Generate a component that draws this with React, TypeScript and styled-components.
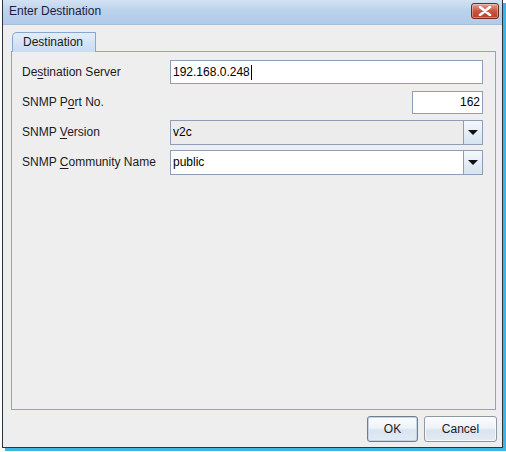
import React from "react";
import styled, { createGlobalStyle } from "styled-components";

const GlobalStyle = createGlobalStyle`
    html, body {
        margin: 0;
        padding: 0;
        background: #ffffff;
    }

    * {
        box-sizing: border-box;
    }
`;

const App = () => {
    return (
        <>
            <GlobalStyle />
            <Screen>
                <Window>
                    <TitleBar>
                        <TitleText>Enter Destination</TitleText>
                        <CloseButton aria-label="Close">
                            <svg width="14" height="10" viewBox="0 0 14 10">
                                <path
                                    d="M2 1 L12 9 M12 1 L2 9"
                                    stroke="#ffffff"
                                    strokeWidth="2.6"
                                    strokeLinecap="round"
                                />
                            </svg>
                        </CloseButton>
                    </TitleBar>

                    <Body>
                        <Tabs.Strip>
                            <Tabs.Tab>Destination</Tabs.Tab>
                        </Tabs.Strip>

                        <Tabs.Panel>
                            <Form.Grid>
                                <Form.Label>
                                    De<u>s</u>tination Server
                                </Form.Label>
                                <Form.TextField>
                                    <Form.Value>192.168.0.248</Form.Value>
                                    <Form.Caret />
                                </Form.TextField>

                                <Form.Label>
                                    SNMP P<u>o</u>rt No.
                                </Form.Label>
                                <Form.PortField>
                                    <Form.Value>162</Form.Value>
                                </Form.PortField>

                                <Form.Label>
                                    SNMP <u>V</u>ersion
                                </Form.Label>
                                <Combo.Box disabled>
                                    <Combo.Value>v2c</Combo.Value>
                                    <Combo.Arrow>
                                        <Combo.Triangle />
                                    </Combo.Arrow>
                                </Combo.Box>

                                <Form.Label>
                                    SNMP <u>C</u>ommunity Name
                                </Form.Label>
                                <Combo.Box>
                                    <Combo.Value>public</Combo.Value>
                                    <Combo.Arrow>
                                        <Combo.Triangle />
                                    </Combo.Arrow>
                                </Combo.Box>
                            </Form.Grid>
                        </Tabs.Panel>

                        <Footer>
                            <DialogButton primary>OK</DialogButton>
                            <DialogButton>Cancel</DialogButton>
                        </Footer>
                    </Body>
                </Window>
            </Screen>
        </>
    );
};

export default App;

const Screen = styled.div`
    width: 506px;
    height: 452px;

    padding-left: 2px;

    font-family: "Liberation Sans", Arial, sans-serif;
    font-size: 12px;
    color: #1b1b1b;
`;

const Window = styled.div`
    width: 501px;
    height: 448px;

    display: flex;
    flex-direction: column;

    background: #eeeeee;
    border: 1px solid #2a3340;
    border-top: none;
    box-shadow: 3px 3px 0 #3fb6e2;
`;

const TitleBar = styled.div`
    height: 25px;

    display: flex;
    align-items: center;
    justify-content: space-between;

    padding: 0 3px 2px 6px;

    background: linear-gradient(#d3e2f3, #bcd2ec 45%, #b2cbe8);
    border-bottom: 1px solid #a6bedc;
`;

const TitleText = styled.span`
    font-size: 12px;
    color: #1c1c40;
`;

const CloseButton = styled.div`
    width: 28px;
    height: 16px;

    display: flex;
    align-items: center;
    justify-content: center;

    border: 1px solid #6b2a22;
    border-radius: 3px;
    background: linear-gradient(#e6a291, #c9553f 50%, #b8402c);
    box-shadow: inset 0 0 0 1px rgba(255, 255, 255, 0.35);
`;

const Body = styled.div`
    flex: 1;

    display: flex;
    flex-direction: column;

    padding: 7px 6px 0 8px;
`;

const Tabs = {
    Strip: styled.div`
        display: flex;

        padding-left: 1px;
    `,

    Tab: styled.div`
        width: 84px;
        height: 20px;

        display: flex;
        align-items: center;

        padding: 0 0 1px 10px;
        margin-bottom: -1px;

        position: relative;
        z-index: 1;

        font-size: 12px;
        color: #1b1b1b;

        background: linear-gradient(#e2edf9, #c9dcf2);
        border: 1px solid #8aa6cc;
        border-bottom: none;
        border-top-left-radius: 5px;
        border-top-right-radius: 1px;
    `,

    Panel: styled.div`
        height: 359px;

        padding: 8px 12px 0 10px;

        border: 1px solid #8aa6cc;
    `,
};

const Form = {
    Grid: styled.div`
        display: grid;
        grid-template-columns: 148px 1fr;
        grid-auto-rows: 24px;
        row-gap: 6px;
        align-items: center;
    `,

    Label: styled.span`
        font-size: 12px;
        color: #1b1b1b;

        u {
            text-decoration-thickness: 1px;
            text-underline-offset: 2px;
        }
    `,

    TextField: styled.div`
        height: 24px;

        display: flex;
        align-items: center;

        padding: 0 2px;

        background: #ffffff;
        border: 1px solid #8f9eb3;
    `,

    PortField: styled.div`
        width: 71px;
        height: 23px;

        justify-self: end;

        display: flex;
        align-items: center;
        justify-content: flex-end;

        padding: 0 2px;

        background: #ffffff;
        border: 1px solid #8f9eb3;
    `,

    Value: styled.span`
        font-size: 12px;
        color: #000000;
    `,

    Caret: styled.span`
        width: 1px;
        height: 15px;

        margin-left: 1px;

        background: #000000;
    `,
};

const Combo = {
    Box: styled.div<{ disabled?: boolean }>`
        height: 25px;

        display: flex;
        align-items: stretch;

        background: ${(props) => (props.disabled ? "#ececec" : "#ffffff")};
        border: 1px solid #8f9eb3;
    `,

    Value: styled.span`
        flex: 1;

        display: flex;
        align-items: center;

        padding-left: 2px;

        font-size: 12px;
        color: #000000;
    `,

    Arrow: styled.div`
        width: 19px;

        display: flex;
        align-items: center;
        justify-content: center;

        background: linear-gradient(#f4f8fc, #d6e3f1);
        border-left: 1px solid #8f9eb3;
    `,

    Triangle: styled.span`
        width: 0;
        height: 0;

        border-left: 5px solid transparent;
        border-right: 5px solid transparent;
        border-top: 5px solid #111111;
    `,
};

const Footer = styled.div`
    display: flex;
    justify-content: flex-end;
    gap: 6px;

    padding: 6px 0 5px;
    margin-right: -1px;
`;

const DialogButton = styled.button<{ primary?: boolean }>`
    width: ${(props) => (props.primary ? "51px" : "73px")};
    height: 26px;

    font-family: "Liberation Sans", Arial, sans-serif;
    font-size: 12px;
    color: #1b1b1b;

    background: linear-gradient(#fbfcfd, #eef3f8 45%, #d9e4ef 55%, #e3ebf4);
    border: 1px solid ${(props) => (props.primary ? "#6f7d8c" : "#8d98a5")};
    border-radius: 3px;
    box-shadow: ${(props) =>
        props.primary
            ? "inset 0 0 0 1px #c4d3e3"
            : "inset 0 0 0 1px rgba(255, 255, 255, 0.7)"};

    cursor: pointer;
`;
